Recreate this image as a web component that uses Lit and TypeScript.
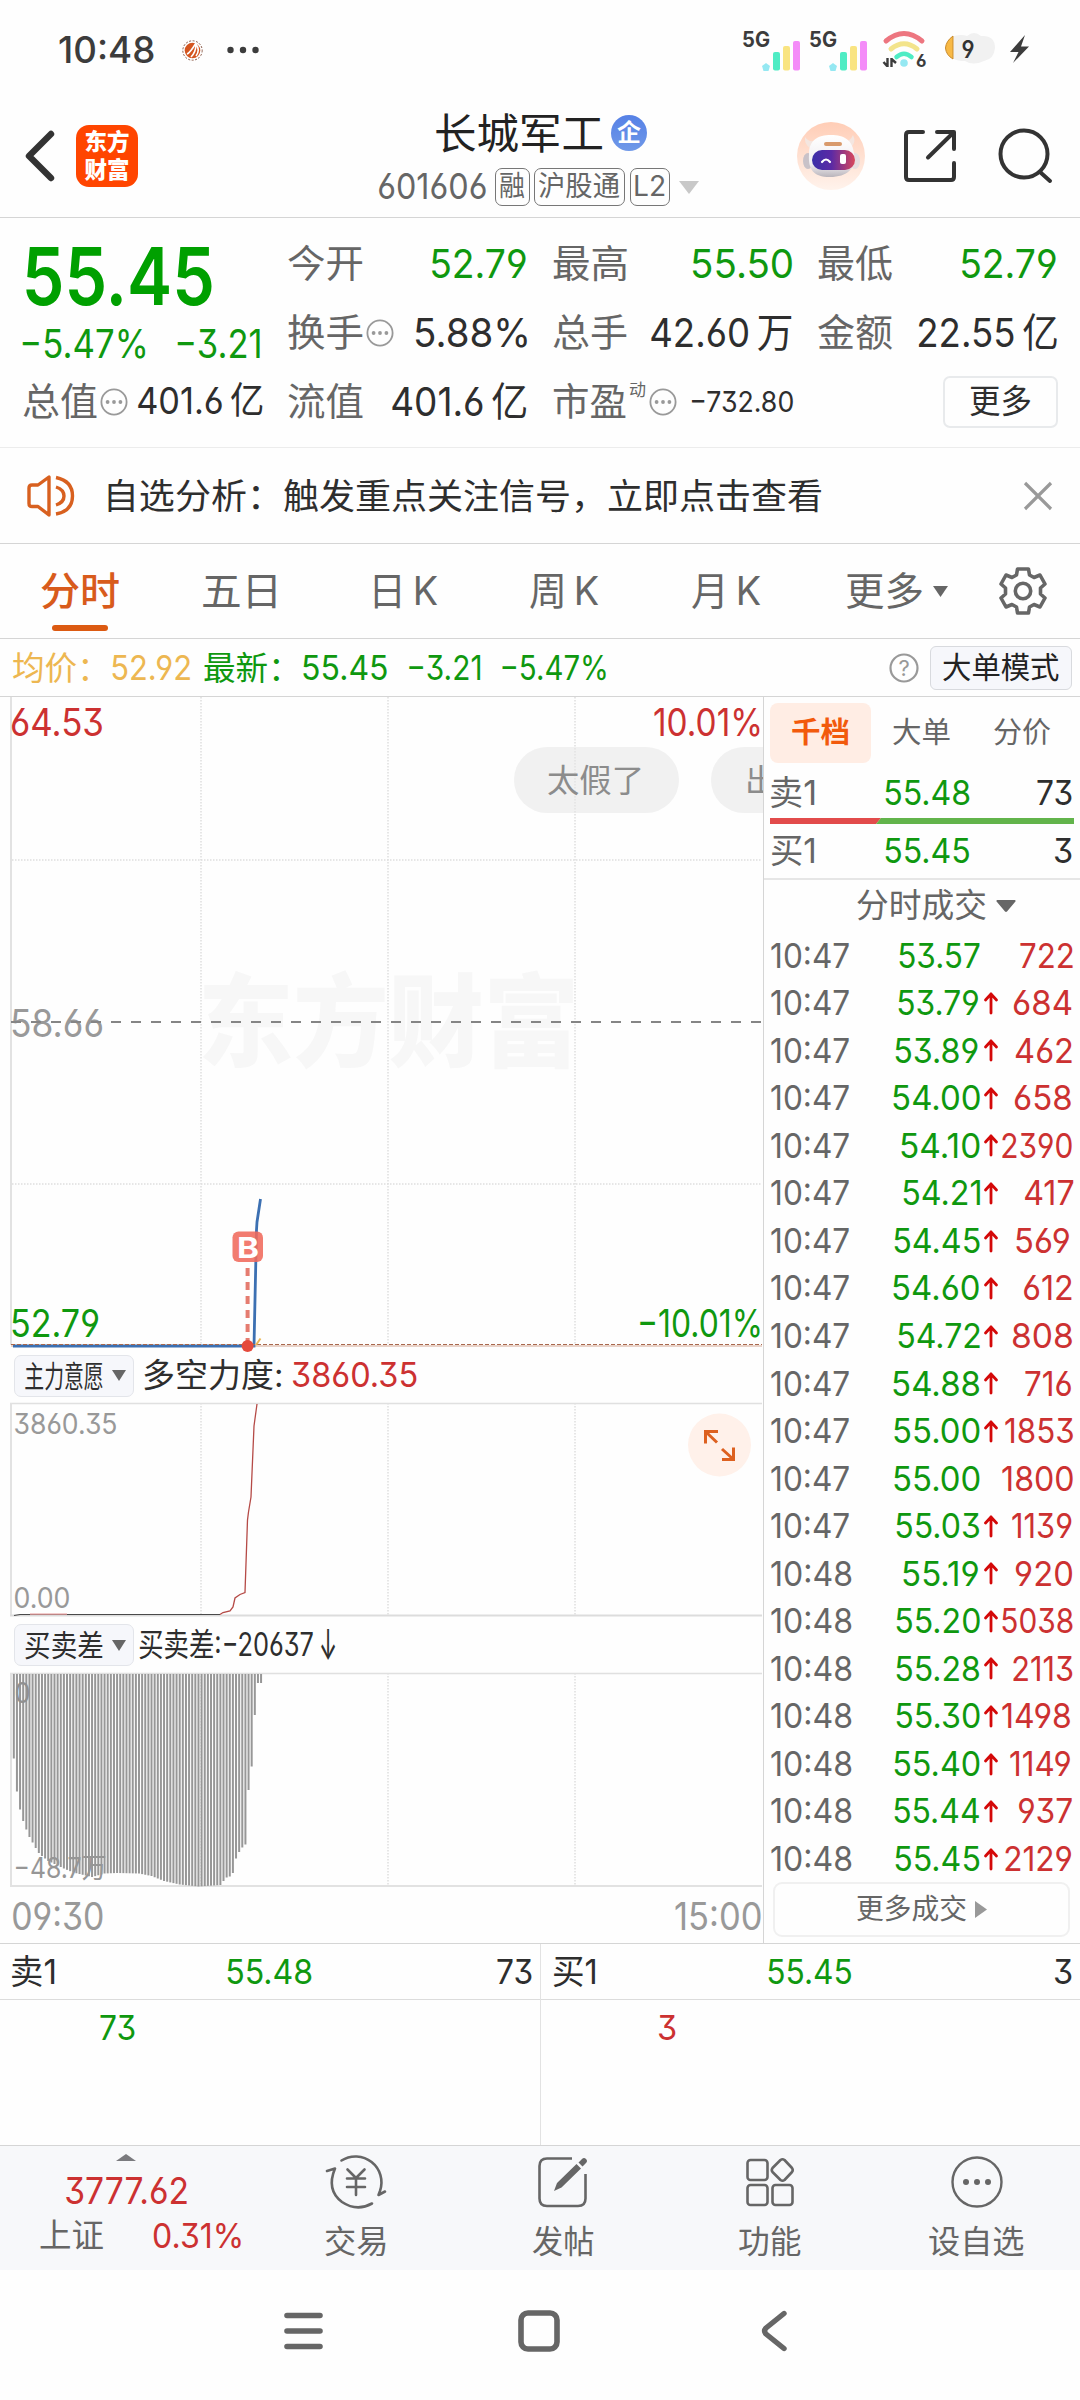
import { LitElement, html, svg, css } from 'lit';
import { customElement, property } from 'lit/decorators.js';

const UI = css`
  * { box-sizing: border-box; }
  .green { color: #0f980f; }
  .red { color: #cc3131; }
  .gray { color: #666; }
  .dark { color: #2e2e2e; }
  svg { display: block; flex: none; overflow: visible; }
`;

const measureCtx = document.createElement('canvas').getContext('2d')!;

/** One line of text whose ink fills exactly `w` pixels. */
@customElement('fit-text')
class FitText extends LitElement {
  static styles = css`
    :host { display: inline-block; flex: none; white-space: nowrap; line-height: 1.2; }
    span { display: inline-block; transform-origin: 0 50%; }
  `;
  @property({ type: Number }) w = 0;
  @property() t = '';
  render() { return html`<span>${this.t}</span>`; }
  updated() {
    const span = this.renderRoot.querySelector('span') as HTMLElement;
    const cs = getComputedStyle(this);
    measureCtx.font = `${cs.fontWeight} ${cs.fontSize} ${cs.fontFamily}`;
    const m = measureCtx.measureText(this.t);
    const ink = m.actualBoundingBoxRight + m.actualBoundingBoxLeft;
    const k = this.w / ink;
    this.style.width = `${this.w}px`;
    span.style.transform = `translateX(${m.actualBoundingBoxLeft * k}px) scaleX(${k})`;
  }
}

const fit = (t: string, w: number, cls = '') => html`<fit-text class=${cls} t=${t} w=${w}></fit-text>`;

const moreDots = html`<svg width="28" height="28" viewBox="0 0 28 28">
  <circle cx="14" cy="14" r="12.6" fill="none" stroke="#999" stroke-width="1.8"/>
  <circle cx="7.6" cy="14" r="1.9" fill="#999"/><circle cx="14" cy="14" r="1.9" fill="#999"/><circle cx="20.4" cy="14" r="1.9" fill="#999"/>
</svg>`;

@customElement('status-bar')
class StatusBar extends LitElement {
  static styles = [UI, css`
    :host { display: flex; height: 100px; align-items: center; padding: 1px 51px 0 59px; color: #3c3c3c; justify-content: space-between; }
    .left, .right { display: flex; align-items: center; }
    .time { font-size: 37px; font-weight: 500; }
    .ball { margin-left: 28px; }
    .dots { margin-left: 24px; }
    .net { font-size: 21px; font-weight: 700; }
    .six { font-size: 17px; font-weight: 700; }
    .nine { font-size: 24px; font-weight: 600; }
  `];
  signal() {
    return html`<svg width="67" height="40" viewBox="742 32 67 40">
      <text class="net" x="742" y="48" textLength="28" lengthAdjust="spacingAndGlyphs" fill="#3c3c3c">5G</text>
      <path d="M766 64l4 3-1.500 5h-5l-1.500-5z" fill="#95e8f2"/>
      <rect x="773" y="53" width="7" height="18.500" rx="2" fill="#4fecc4"/>
      <rect x="783" y="47" width="7" height="24.500" rx="2" fill="#f9e481"/>
      <rect x="793" y="42" width="7" height="29.500" rx="2" fill="#f48cf8"/>
    </svg>`;
  }
  render() {
    return html`
      <div class="left">
        ${fit('10:48', 95, 'time')}
        <svg class="ball" width="21" height="21" viewBox="0 0 21 21">
          <circle cx="10.500" cy="10.500" r="9.700" fill="#fff" stroke="#8a5a48" stroke-width="1" stroke-dasharray="2 1.500"/>
          <circle cx="10.500" cy="10.500" r="7.800" fill="#d4551f"/>
          <path d="M5 14C8 13 11 8 14 3M9 17C13 13 14 9 14 4M14 16C17 12 17 8 14 4" fill="none" stroke="#fff" stroke-width="1.600"/>
        </svg>
        <svg class="dots" width="32" height="8" viewBox="0 0 32 8" fill="#3c3c3c"><circle cx="3.500" cy="4" r="3.200"/><circle cx="16" cy="4" r="3.200"/><circle cx="28.500" cy="4" r="3.200"/></svg>
      </div>
      <div class="right">
        ${this.signal()}${this.signal()}
        <svg width="153" height="40" viewBox="876 32 153 40">
          <g fill="none" stroke-linecap="round">
            <path d="M886 42Q904 27 922 42" stroke="#ed7680" stroke-width="5"/>
            <path d="M891 50Q904 39.500 917 50" stroke="#f3e48c" stroke-width="5"/>
            <path d="M896.500 58Q904 51.500 911.500 58" stroke="#4fecc4" stroke-width="4.500"/>
          </g>
          <circle cx="904" cy="64" r="3.800" fill="#95e8f2"/>
          <path d="M887.500 59V68M883.500 63L887 67M891.500 68V59M892 60.500L896 64" fill="none" stroke="#3c3c3c" stroke-width="2.400"/>
          <text class="six" x="916" y="68" fill="#3c3c3c">6</text>
          <path d="M954 37Q962 35 967 37 974 31 981 37 995 36 995 49 994 60 984 62 973 67 965 62 958 62 954 60Z" fill="#f1f1f1"/>
          <path d="M953 37Q946 42 945.500 49 946 56 953 60Z" fill="#f8b945" stroke="#c88a2c" stroke-width="1"/>
          <text class="nine" x="961.500" y="59" textLength="13" lengthAdjust="spacingAndGlyphs" fill="#333">9</text>
          <path d="M1025 36L1010 53h8.500L1013 64l16-16.500h-8z" fill="#3c3c3c"/>
        </svg>
      </div>`;
  }
}

@customElement('stock-header')
class StockHeader extends LitElement {
  static styles = [UI, css`
    :host { display: grid; grid-template-columns: 359px 360px 1fr; height: 118px; border-bottom: 1px solid #d5d5d5; }
    .left { display: flex; align-items: center; padding: 0 0 6px 24px; }
    .logo { margin-left: 21px; width: 62px; height: 62px; border-radius: 13px; background: #ff4500; color: #fff; display: flex; flex-direction: column; align-items: center; justify-content: center; font-weight: 900; font-size: 22.500px; line-height: 28px; }
    .mid { padding-top: 8px; }
    .title { height: 50px; display: flex; align-items: center; justify-content: center; gap: 9px; padding-left: 5px; font-size: 42px; color: #222; }
    .title fit-text { padding-top: 2px; }
    .badge { width: 36px; height: 36px; border-radius: 50%; background: linear-gradient(#5681e6, #6f98e8); color: #fff; font-size: 24px; font-weight: 700; display: flex; align-items: center; justify-content: center; line-height: 1; }
    .code { height: 58px; display: flex; align-items: center; justify-content: center; gap: 4.500px; font-size: 36px; color: #666; }
    .tag { border: 1.500px solid #777; border-radius: 7px; height: 38px; display: flex; align-items: center; justify-content: center; font-size: 28px; padding: 0 4px; }
    .tri { margin-left: 5px; }
    .right { display: flex; align-items: center; padding: 0 27px 6px 78px; gap: 39px; }
    .find { margin-left: 4px; }
  `];
  render() {
    return html`
      <div class="left">
        <svg width="31" height="52" viewBox="0 0 31 52"><path d="M27 4L5 26 27 48" fill="none" stroke="#333" stroke-width="6.400" stroke-linecap="round" stroke-linejoin="round"/></svg>
        <div class="logo"><span>东方</span><span>财富</span></div>
      </div>
      <div class="mid">
        <div class="title">${fit('长城军工', 166)}<span class="badge">企</span></div>
        <div class="code">
          ${fit('601606', 111)}
          <span class="tag">${fit('融', 25)}</span>
          <span class="tag">${fit('沪股通', 81)}</span>
          <span class="tag">${fit('L2', 30)}</span>
          <svg class="tri" width="20" height="13" viewBox="0 0 20 13"><path d="M0 0h20L10 13z" fill="#c8c8c8"/></svg>
        </div>
      </div>
      <div class="right">
        <svg width="68" height="68" viewBox="0 0 68 68">
          <defs>
            <linearGradient id="halo" x2="0" y2="1"><stop offset="0" stop-color="#ffcdb6"/><stop offset="1" stop-color="#fff3ec"/></linearGradient>
            <linearGradient id="visor"><stop offset="0" stop-color="#3b2fa8"/><stop offset=".45" stop-color="#5b2aa5"/><stop offset="1" stop-color="#d9485c"/></linearGradient>
            <linearGradient id="helmet" x2="0" y2="1"><stop offset="0" stop-color="#fff"/><stop offset=".7" stop-color="#f0edf0"/><stop offset="1" stop-color="#b9b4bb"/></linearGradient>
          </defs>
          <circle cx="34" cy="34" r="34" fill="url(#halo)"/>
          <path d="M13 26Q7 22 8 15 11 20 17 19zM53 26Q60 21 56 13 53 20 48 19z" fill="#f4e6e0"/>
          <ellipse cx="11" cy="39" rx="5" ry="8" fill="#c9c2c8"/><ellipse cx="58" cy="39" rx="5" ry="8" fill="#e6dde0"/>
          <path d="M12 32C12 18 21 13 34 13S56 18 57 32C60 46 50 55 33 55S11 47 12 32Z" fill="url(#helmet)"/>
          <rect x="27" y="20" width="18" height="4" rx="2" fill="#d99a6c"/>
          <rect x="15" y="28" width="43" height="20" rx="10" fill="url(#visor)"/>
          <path d="M25 40q4-5 8 0" fill="none" stroke="#fff" stroke-width="2.200" stroke-linecap="round"/>
          <rect x="43" y="32" width="6" height="10" rx="2" fill="#fff"/>
        </svg>
        <svg width="52" height="52" viewBox="0 0 52 52" fill="none" stroke="#333" stroke-width="4" stroke-linecap="round" stroke-linejoin="round">
          <path d="M19 2H5Q2 2 2 5V47Q2 50 5 50H47Q50 50 50 47V33M33 2H50V19M49 3L24 27.500"/>
        </svg>
        <svg class="find" width="54" height="54" viewBox="0 0 54 54" fill="none" stroke="#333" stroke-width="4" stroke-linecap="round">
          <circle cx="25" cy="25" r="23.500"/><path d="M41 43L51 52"/>
        </svg>
      </div>`;
  }
}

@customElement('quote-panel')
class QuotePanel extends LitElement {
  static styles = [UI, css`
    :host { display: grid; grid-template-columns: repeat(4, 240px); column-gap: 25px; height: 230px; padding: 11px 0 0 23px; border-bottom: 1px solid #ececec; }
    .col { display: flex; flex-direction: column; }
    .cell { display: flex; align-items: center; justify-content: space-between; height: 69.300px; }
    .name { display: flex; align-items: center; gap: 3px; font-size: 38px; color: #666; }
    .val { font-size: 40px; margin-right: 1px; }
    .price { height: 93px; display: flex; align-items: center; padding-left: 3px; font-size: 80px; font-weight: 600; color: #00a000; }
    .chg { height: 45px; display: flex; align-items: center; justify-content: space-between; font-size: 39px; margin-left: -1px; padding-right: 3px; }
    .mcap { font-size: 37px; }
    .sup { align-self: flex-start; font-size: 17px; margin-top: 1px; }
    .pe { font-size: 29px; padding-top: 1px; }
    .more { height: 52px; width: 115px; border: 2px solid #e8eaec; border-radius: 7px; font-size: 33px; color: #2e2e2e; display: flex; align-items: center; justify-content: center; }
    .end { justify-content: flex-end; }
  `];
  cell(name: string, nw: number, val: string, vw: number, tone: string) {
    return html`<div class="cell"><span class="name">${fit(name, nw)}</span>${fit(val, vw, 'val ' + tone)}</div>`;
  }
  render() {
    return html`
      <div class="col">
        <div class="price">${fit('55.45', 186)}</div>
        <div class="chg green">${fit('−5.47%', 123)}${fit('−3.21', 83)}</div>
        <div class="cell"><span class="name">${fit('总值', 74)}${moreDots}</span>${fit('401.6\u2009亿', 125, 'mcap dark')}</div>
      </div>
      <div class="col">
        ${this.cell('今开', 75, '52.79', 95, 'green')}
        <div class="cell"><span class="name">${fit('换手', 75)}${moreDots}</span>${fit('5.88%', 111, 'val dark')}</div>
        ${this.cell('流值', 75, '401.6\u2009亿', 135, 'dark')}
      </div>
      <div class="col">
        ${this.cell('最高', 74, '55.50', 99, 'green')}
        ${this.cell('总手', 74, '42.60\u2009万', 141, 'dark')}
        <div class="cell"><span class="name">${fit('市盈', 73)}${fit('动', 17, 'sup')}${moreDots}</span>${fit('−732.80', 102, 'pe dark')}</div>
      </div>
      <div class="col">
        ${this.cell('最低', 74, '52.79', 95, 'green')}
        ${this.cell('金额', 74, '22.55\u2009亿', 138, 'dark')}
        <div class="cell end"><span class="more">${fit('更多', 61)}</span></div>
      </div>`;
  }
}

@customElement('notice-bar')
class NoticeBar extends LitElement {
  static styles = [UI, css`
    :host { display: flex; align-items: center; height: 96px; padding: 0 29px 0 27px; border-bottom: 1px solid #d5d5d5; font-size: 35px; color: #2e2e2e; }
    .msg { margin-left: 33px; margin-right: auto; }
  `];
  render() {
    return html`
      <svg width="48" height="42" viewBox="0 0 48 42" fill="none" stroke="#d8601f" stroke-width="3.400" stroke-linejoin="round">
        <path d="M22 2V40L11 31.500H5Q2 31.500 2 28.500V13Q2 10 5 10H11Z"/>
        <path d="M29 12Q37 14.500 37 21T29 30M29 2.500Q45.500 6 45.500 21T29 39"/>
      </svg>
      ${fit('自选分析：触发重点关注信号，立即点击查看', 713, 'msg')}
      <svg width="26" height="26" viewBox="0 0 26 26"><path d="M0 0L26 26M26 0L0 26" stroke="#999" stroke-width="3.200"/></svg>`;
  }
}

@customElement('period-tabs')
class PeriodTabs extends LitElement {
  static styles = [UI, css`
    :host { display: grid; grid-template-columns: 160px 158px 175px 143px 181px 159px 1fr; height: 95px; border-bottom: 1px solid #d5d5d5; font-size: 39px; color: #666; }
    .tab { display: flex; align-items: center; justify-content: center; position: relative; gap: 11px; }
    .gear { padding-right: 10px; }
    .on { color: #d85b1c; font-weight: 500; }
    .on::after { content: ''; position: absolute; left: 52px; bottom: 7px; width: 56px; height: 6px; border-radius: 3px; background: #dc5a12; }
  `];
  render() {
    return html`
      <div class="tab on">${fit('分时', 78)}</div>
      <div class="tab">${fit('五日', 73)}</div>
      <div class="tab">${fit('日\u2009K', 64)}</div>
      <div class="tab">${fit('周\u2009K', 69)}</div>
      <div class="tab">${fit('月\u2009K', 69)}</div>
      <div class="tab">${fit('更多', 76)}<svg width="15" height="11" viewBox="0 0 15 11"><path d="M0 0h15L7.500 11z" fill="#666"/></svg></div>
      <div class="tab gear"><svg width="48" height="48" viewBox="-24 -24 48 48" fill="none" stroke="#666" stroke-width="3.600" stroke-linejoin="round">
        <path d="M-5.500-22H5.500L6.500-16 11-13.500 17-16 22-7 17.500-3V3L22 7 17 16 11 13.500 6.500 16 5.500 22H-5.500L-6.500 16-11 13.500-17 16-22 7-17.500 3V-3L-22-7-17-16-11-13.500-6.500-16Z"/>
        <circle r="7.700"/></svg></div>`;
  }
}

@customElement('info-line')
class InfoLine extends LitElement {
  static styles = [UI, css`
    :host { display: flex; align-items: center; height: 58px; padding: 1px 8px 0 13px; border-bottom: 1px solid #d5d5d5; font-size: 34px; }
    .cjk { font-size: 33px; }
    .avg { color: #edb751; display: flex; gap: 24px; align-items: center; padding-top: 1px; }
    .last { display: flex; align-items: center; margin-left: 11px; padding-top: 1px; }
    .a { margin-left: 24px; } .b { margin-left: 22px; }
    .help { margin-left: auto; }
    .mode { margin-left: 11px; width: 142px; height: 44px; border: 1.500px solid #d8dade; border-radius: 6px; background: #f6f7fb; font-size: 29.500px; color: #222; display: flex; align-items: center; justify-content: center; }
    .q { font-size: 22px; }
  `];
  render() {
    return html`
      <div class="avg">${fit('均价：', 75, 'cjk')}${fit('52.92', 81)}</div>
      <div class="last green">${fit('最新：', 75, 'cjk')}${fit('55.45', 84, 'a')}${fit('−3.21', 71, 'b')}${fit('−5.47%', 104, 'b')}</div>
      <svg class="help" width="30" height="30" viewBox="0 0 30 30"><circle cx="15" cy="15" r="13.500" fill="none" stroke="#999" stroke-width="2.200"/><text class="q" x="15" y="23" text-anchor="middle" fill="#999">?</text></svg>
      <span class="mode">${fit('大单模式', 116)}</span>`;
  }
}

const FIRST_X = 12.8;
const STEP = 3.13;

const imbalanceProfile: [number, number][] = [
  [0, 84.5], [1, 117.5], [2, 135.500], [3, 147], [4, 155.500], [5, 163], [6, 168.500], [7, 174], [8, 179], [9, 182],
  [11, 187], [16, 194.500], [19, 198.500], [25, 203], [29, 199.500], [33, 199], [40, 199.500], [44, 202], [48, 207],
  [53, 210.500], [59, 212.500], [66, 211], [67, 207], [68, 203.500], [69, 202.500], [70, 199], [71, 184.500],
  [72, 178], [73, 173.500], [74, 170.500], [75, 116], [76, 92.500], [77, 41], [78, 9], [79, 9],
];

function barLength(i: number): number {
  for (let n = 1; n < imbalanceProfile.length; n++) {
    const [x0, y0] = imbalanceProfile[n - 1];
    const [x1, y1] = imbalanceProfile[n];
    if (i <= x1) return y0 + ((y1 - y0) * (i - x0)) / (x1 - x0);
  }
  return 0;
}

@customElement('minute-chart')
class MinuteChart extends LitElement {
  static styles = [UI, css`
    :host { display: block; width: 763px; height: 1246px; overflow: hidden; }
    .axis { font-size: 38px; }
    .sub { font-size: 28px; }
    .mark { font-size: 101px; font-weight: 900; }
    .chip { font-size: 32px; }
    .flag { font-size: 29px; font-weight: 700; }
    .head { display: flex; align-items: center; padding-left: 14px; height: 55px; font-size: 33px; color: #2e2e2e; }
    .head2 { display: flex; align-items: center; padding: 1px 0 0 14px; height: 57px; font-size: 32px; color: #2e2e2e; }
    .pick { width: 120px; height: 42px; border: 1.500px solid #e3e5ea; border-radius: 7px; background: #f6f7fb; display: flex; align-items: center; gap: 9px; padding-left: 10px; font-size: 30px; }
    .m1 { margin-left: 10px; } .m2 { margin-left: 12px; } .m3 { margin-left: 5px; } .m4 { margin-left: 7px; font-size: 42px; }
    .num { font-size: 33.500px; }
    .times { display: flex; justify-content: space-between; align-items: center; height: 56px; padding: 0 2px 0 13px; font-size: 37.500px; color: #999; }
  `];
  label(x: number, y: number, w: number, t: string, fill: string, cls = 'axis') {
    return svg`<text class=${cls} x=${x} y=${y} textLength=${w} lengthAdjust="spacingAndGlyphs" fill=${fill}>${t}</text>`;
  }
  vlines(y0: number, y1: number) {
    return [201, 388, 575].map(x => svg`<line x1=${x} x2=${x} y1=${y0} y2=${y1} stroke="#dedede" stroke-width="1.500" stroke-dasharray="1.500 1.500"/>`);
  }
  render() {
    const tri = html`<svg width="14" height="11" viewBox="0 0 14 11"><path d="M0 0h14L7 11z" fill="#666"/></svg>`;
    return html`
      <svg width="763" height="651" viewBox="0 697 763 651">
        <text class="mark" x="198" y="1059" textLength="381" lengthAdjust="spacingAndGlyphs" fill="#f7f7f7">东方财富</text>
        ${this.vlines(697, 1344)}
        <path d="M12 860H762M12 1184H762" stroke="#dedede" stroke-width="1.500" stroke-dasharray="1.500 1.500"/>
        <line x1="11" x2="11" y1="697" y2="1345" stroke="#e2e2e2" stroke-width="2"/>
        <rect x="514" y="747" width="165" height="66" rx="33" fill="#e6e6e6" opacity=".55"/>
        <rect x="711" y="747" width="165" height="66" rx="33" fill="#e6e6e6" opacity=".55"/>
        ${this.label(547, 792, 97, '太假了', '#8c8c8c', 'chip')}
        <text class="chip" x="745" y="792" fill="#8c8c8c">出</text>
        ${this.label(10, 735.5, 94, '64.53', '#cc3131')}
        ${this.label(653, 735.5, 110, '10.01%', '#cc3131')}
        ${this.label(10, 1036.5, 94, '58.66', '#999')}
        <line x1="11" x2="762" y1="1022" y2="1022" stroke="#858585" stroke-width="2" stroke-dasharray="10 10"/>
        ${this.label(10, 1336.5, 90, '52.79', '#0f980f')}
        ${this.label(637, 1336.5, 126, '−10.01%', '#0f980f')}
        <line x1="11" x2="762" y1="1346" y2="1346" stroke="#e9d3c9" stroke-width="2"/>
        <polyline points="13,1346 254,1346 256.500,1230 257,1222 260.500,1199" fill="none" stroke="#3c70b2" stroke-width="2.800"/>
        <line x1="11" x2="762" y1="1344.500" y2="1344.500" stroke="#a9694e" stroke-width="1.200" stroke-dasharray="4 2"/>
        <path d="M256 1345L260.500 1338.500" stroke="#edb751" stroke-width="2"/>
        <line x1="247.600" x2="247.600" y1="1268" y2="1342" stroke="#e57c70" stroke-width="4" stroke-dasharray="8 6"/>
        <circle cx="247.600" cy="1346" r="6" fill="#e44a3c"/>
        <rect x="232.500" y="1231.500" width="30.500" height="30.500" rx="6" fill="#f06a5c" opacity=".88"/>
        <text class="flag" x="237" y="1257.500" textLength="22" lengthAdjust="spacingAndGlyphs" fill="#fff">B</text>
      </svg>
      <div class="head">
        <span class="pick">${fit('主力意愿', 78)}${tri}</span>
        ${fit('多空力度:', 137, 'm1')}${fit('3860.35', 125, 'num red m2')}
      </div>
      <svg width="763" height="213" viewBox="0 1403 763 213">
        ${this.vlines(1403, 1615)}
        <path d="M10 1403.500H762" stroke="#e0e0e0" stroke-width="1.500"/>
        <path d="M11 1403V1616" stroke="#e2e2e2" stroke-width="2"/><path d="M10 1615.500H762" stroke="#dcdcdc" stroke-width="2"/>
        ${this.label(13.500, 1433.500, 104, '3860.35', '#999', 'sub')}
        ${this.label(13.500, 1607.500, 57, '0.00', '#999', 'sub')}
        <path d="M14 1615.500L20 1614.500H220" fill="none" stroke="#4a4a4a" stroke-width="1.200"/>
        <path d="M30 1614.200H67" stroke="#e59a9a" stroke-width="1.200"/>
        <polyline points="220,1614.500 223,1612.500 230,1611 233,1607 235,1598 240,1594.500 245,1592.500 247.500,1520 248.500,1512 251,1497 254,1426 257,1404" fill="none" stroke="#b54a46" stroke-width="1.300"/>
        <circle cx="719.500" cy="1445" r="31.500" fill="#fff1ea"/>
        <path d="M718 1431.500H705.500V1443.500M706 1432L717 1442.500M722 1459.500H733.500V1447.500M733 1459L722 1449" fill="none" stroke="#dd6120" stroke-width="3"/>
      </svg>
      <div class="head2">
        <span class="pick">${fit('买卖差', 78)}${tri}</span>
        ${fit('买卖差:−20637', 175, 'm3')}${fit('↓', 14, 'm4')}
      </div>
      <svg width="763" height="215" viewBox="0 1673 763 215">
        ${this.vlines(1673, 1886)}
        <path d="M10 1673.500H762" stroke="#e0e0e0" stroke-width="1.500"/>
        <path d="M11 1673V1887" stroke="#e2e2e2" stroke-width="2"/><path d="M10 1886H762" stroke="#e2e2e2" stroke-width="2.200"/>
        ${Array.from({ length: 80 }, (_, i) => svg`<rect x=${FIRST_X + i * STEP} y="1674" width="2" height=${barLength(i)} fill="#979797"/>`)}
        ${this.label(14.500, 1703, 16, '0', '#909090', 'sub')}
        ${this.label(13.500, 1878, 93, '−48.7万', '#969696', 'sub')}
      </svg>
      <div class="times">${fit('09:30', 91)}${fit('15:00', 86)}</div>`;
  }
}

const trades: [string, string, boolean, string][] = [
  ['10:47', '53.57', false, '722'], ['10:47', '53.79', true, '684'], ['10:47', '53.89', true, '462'],
  ['10:47', '54.00', true, '658'], ['10:47', '54.10', true, '2390'], ['10:47', '54.21', true, '417'],
  ['10:47', '54.45', true, '569'], ['10:47', '54.60', true, '612'], ['10:47', '54.72', true, '808'],
  ['10:47', '54.88', true, '716'], ['10:47', '55.00', true, '1853'], ['10:47', '55.00', false, '1800'],
  ['10:47', '55.03', true, '1139'], ['10:48', '55.19', true, '920'], ['10:48', '55.20', true, '5038'],
  ['10:48', '55.28', true, '2113'], ['10:48', '55.30', true, '1498'], ['10:48', '55.40', true, '1149'],
  ['10:48', '55.44', true, '937'], ['10:48', '55.45', true, '2129'],
];

const GLYPH_W: Record<string, number> = {
  '0': 20.6, '1': 12.2, '2': 18.8, '3': 18.5, '4': 20.5, '5': 19.2, '6': 20, '7': 17.5, '8': 20.5, '9': 20, '.': 8, ':': 9,
};
const inkWidth = (t: string) => Math.min([...t].reduce((s, c) => s + (GLYPH_W[c] ?? 0), -2), t.includes('.') || t.includes(':') ? 99 : 71);

@customElement('order-panel')
class OrderPanel extends LitElement {
  static styles = [UI, css`
    :host { display: block; width: 317px; height: 1246px; border-left: 1px solid #d5d5d5; font-size: 34.500px; }
    .tabs { display: grid; grid-template-columns: 101px 101px 101px; margin: 0 0 0 6px; height: 60px; font-size: 29px; color: #666; }
    .wrap { padding-top: 6px; }
    .tab { display: flex; align-items: center; justify-content: center; }
    .on { background: #ffede4; border-radius: 8px; color: #f25a0c; font-weight: 700; }
    .level { display: grid; grid-template-columns: 114px 86px 1fr; align-items: center; padding: 0 8px 0 7px; }
    .l1 { height: 55px; padding-top: 5px; }
    .level > :last-child { justify-self: end; }
    .meter { margin: 0 6px; }
    .l2 { height: 54px; }
    .title { display: flex; align-items: center; justify-content: center; height: 53px; border-top: 2px solid #e6e6e6; font-size: 33px; color: #666; gap: 10px; padding: 0 16px 0 44px; }
    .row { display: grid; grid-template-columns: 100px 108.500px 18px 1fr; align-items: center; height: 47.550px; padding: 1px 7px 0 7px; }
    .row > .p, .row > .q { justify-self: end; }
    .arr { margin-left: 4px; }
    .more { margin: 0 10px 0 9px; height: 55px; border: 2px solid #f0f0f0; border-radius: 9px; display: flex; align-items: center; justify-content: center; gap: 9px; font-size: 28px; color: #666; }
  `];
  render() {
    return html`
      <div class="wrap"><div class="tabs">
        <span class="tab on">${fit('千档', 57)}</span><span class="tab">${fit('大单', 57)}</span><span class="tab">${fit('分价', 57)}</span>
      </div></div>
      <div class="level l1">${fit('卖1', 43, 'gray')}${fit('55.48', 85, 'green')}${fit('73', 35, 'dark')}</div>
      <svg class="meter" width="304" height="6" viewBox="0 0 304 6"><path d="M0 0H111L106 6H0Z" fill="#e24b4b"/><path d="M111 0H304V6H106Z" fill="#62b44b"/></svg>
      <div class="level l2">${fit('买1', 43, 'gray')}${fit('55.45', 84, 'green')}${fit('3', 17, 'dark')}</div>
      <div class="title">${fit('分时成交', 129)}<svg width="20" height="12" viewBox="0 0 20 12"><path d="M1 0H19Q20.500 1 19 2L11 11.500Q10 12.300 9 11.500L1 2Q-.500 1 1 0Z" fill="#666"/></svg></div>
      ${trades.map(([time, price, up, qty]) => html`
        <div class="row">
          ${fit(time, inkWidth(time), 'gray')}
          ${fit(price, inkWidth(price), 'green p')}
          ${up ? html`<svg class="arr" width="14" height="22" viewBox="0 0 14 22"><path d="M7 21V2M1.500 8L7 2 12.500 8" fill="none" stroke="#d40808" stroke-width="2.800" stroke-linecap="round" stroke-linejoin="round"/></svg>` : html`<span></span>`}
          ${fit(qty, inkWidth(qty), 'red q')}
        </div>`)}
      <div class="more">${fit('更多成交', 109)}<svg width="12" height="17" viewBox="0 0 12 17"><path d="M0 0L12 8.500 0 17z" fill="#999"/></svg></div>`;
  }
}

@customElement('depth-panel')
class DepthPanel extends LitElement {
  static styles = [UI, css`
    :host { display: grid; grid-template-columns: 540px 540px; height: 202px; border-top: 1px solid #d5d5d5; font-size: 34.500px; }
    .side + .side { border-left: 1px solid #e2e2e2; }
    .top { display: grid; grid-template-columns: 215px 85px 1fr; align-items: center; height: 56px; padding: 0 8px 0 12px; border-bottom: 1px solid #dcdcdc; }
    .top > :last-child { justify-self: end; }
    .queue { display: flex; justify-content: flex-end; width: 135px; height: 55px; align-items: center; }
  `];
  render() {
    return html`
      <div class="side">
        <div class="top">${fit('卖1', 42, 'dark')}${fit('55.48', 85, 'green')}${fit('73', 35, 'dark')}</div>
        <div class="queue green">${fit('73', 35)}</div>
      </div>
      <div class="side">
        <div class="top">${fit('买1', 42, 'dark')}${fit('55.45', 83, 'green')}${fit('3', 17, 'dark')}</div>
        <div class="queue red">${fit('3', 17)}</div>
      </div>`;
  }
}

@customElement('bottom-bar')
class BottomBar extends LitElement {
  static styles = [UI, css`
    :host { display: grid; grid-template-columns: 252px repeat(4, 207px); height: 125px; background: #f7f8fa; border-top: 1px solid #d5d5d5; color: #666; font-size: 31.500px; }
    .index { display: flex; flex-direction: column; align-items: center; padding-top: 8px; }
    .value { font-size: 37px; height: 60px; display: flex; align-items: center; }
    .sub { display: flex; align-items: center; width: 202px; justify-content: space-between; font-size: 34px; padding-left: 1px; height: 30px; margin: 0 0 0 27px; }
    .cn { font-size: 33px; }
    .item { display: flex; flex-direction: column; align-items: center; }
    .ico { height: 72px; display: flex; align-items: center; }
    .lab { height: 48px; display: flex; align-items: center; }
  `];
  item(icon: unknown, label: string, w: number) {
    return html`<div class="item"><div class="ico">${icon}</div><div class="lab">${fit(label, w)}</div></div>`;
  }
  render() {
    const trade = html`<svg width="60" height="56" viewBox="-30 -28 60 56" fill="none" stroke="#666" stroke-width="2.600" stroke-linecap="round" stroke-linejoin="round">
      <path d="M-14.500-21.500A26 26 0 0 1 24 9L22.500 13 29 9.500M-29-11L-21-13.500Q-30 8-14 20 1 30 16 21.500"/>
      <path d="M-8.500-12.500L0-4 8.500-12.500M0-4V13M-9-3.500H9M-9 5H9"/></svg>`;
    const post = html`<svg width="50" height="51" viewBox="0 0 50 51">
      <path d="M34 1.500H9Q1.500 1.500 1.500 9V41.500Q1.500 49 9 49H40Q47.500 49 47.500 41.500V17" fill="none" stroke="#666" stroke-width="2.600"/>
      <path d="M16 34L19 26 38.500 7 43 11.500 23.500 30.500ZM40.500 5.500L44 2Q46 0 48 2T48 6L44.500 9.500Z" fill="#666"/></svg>`;
    const tools = html`<svg width="48" height="48" viewBox="0 0 48 48" fill="none" stroke="#666" stroke-width="2.600" stroke-linejoin="round">
      <rect x="1.500" y="2" width="20" height="20" rx="3"/><rect x="1.500" y="27" width="20" height="20" rx="3"/><rect x="26.500" y="27" width="20" height="20" rx="3"/>
      <path d="M34.500 2Q36.500.500 38.500 2L46 10Q47.500 12 46 14L38.500 22Q36.500 23.500 34.500 22L26.500 14Q25 12 26.500 10Z"/></svg>`;
    const add = html`<svg width="52" height="52" viewBox="0 0 52 52"><circle cx="26" cy="26" r="24.500" fill="none" stroke="#666" stroke-width="2.400"/>
      <g fill="#666"><circle cx="15" cy="26" r="3"/><circle cx="26" cy="26" r="3"/><circle cx="37" cy="26" r="3"/></g></svg>`;
    return html`
      <div class="index">
        <svg width="20" height="7" viewBox="0 0 20 7"><path d="M0 7L10 0 20 7z" fill="#7a7a7e"/></svg>
        <div class="value red">${fit('3777.62', 121)}</div>
        <div class="sub">${fit('上证', 63, 'cn')}${fit('0.31%', 87, 'red')}</div>
      </div>
      ${this.item(trade, '交易', 61)}${this.item(post, '发帖', 62)}${this.item(tools, '功能', 62)}${this.item(add, '设自选', 95)}`;
  }
}

@customElement('system-nav')
class SystemNav extends LitElement {
  static styles = [UI, css`
    :host { display: flex; height: 129px; padding: 40px 0 0 283px; }
    .home { margin-left: 195px; } .back { margin-left: 201px; }
  `];
  render() {
    return html`
      <svg width="40" height="42" viewBox="0 0 40 42"><path d="M4 5.500H37M4 21H37M4 36.500H37" stroke="#666" stroke-width="5.600" stroke-linecap="round"/></svg>
      <svg class="home" width="42" height="42" viewBox="0 0 42 42"><rect x="3" y="3" width="36" height="36" rx="7" fill="none" stroke="#666" stroke-width="5.600"/></svg>
      <svg class="back" width="26" height="42" viewBox="0 0 26 42"><path d="M23 3.500L5 18Q2 21 5 24L23 38.500" fill="none" stroke="#666" stroke-width="5.400" stroke-linecap="round" stroke-linejoin="round"/></svg>`;
  }
}

@customElement('app-root')
class AppRoot extends LitElement {
  static styles = [UI, css`
    :host { display: block; width: 1080px; height: 2400px; overflow: hidden; background: #fefefe; font-family: Inter, "Noto Sans CJK SC", sans-serif; font-feature-settings: "cv03", "cv04", "cv09"; line-height: 1.2; }
    .market { display: flex; height: 1246px; }
  `];
  render() {
    return html`
      <status-bar></status-bar>
      <stock-header></stock-header>
      <quote-panel></quote-panel>
      <notice-bar></notice-bar>
      <period-tabs></period-tabs>
      <info-line></info-line>
      <div class="market"><minute-chart></minute-chart><order-panel></order-panel></div>
      <depth-panel></depth-panel>
      <bottom-bar></bottom-bar>
      <system-nav></system-nav>`;
  }
}
